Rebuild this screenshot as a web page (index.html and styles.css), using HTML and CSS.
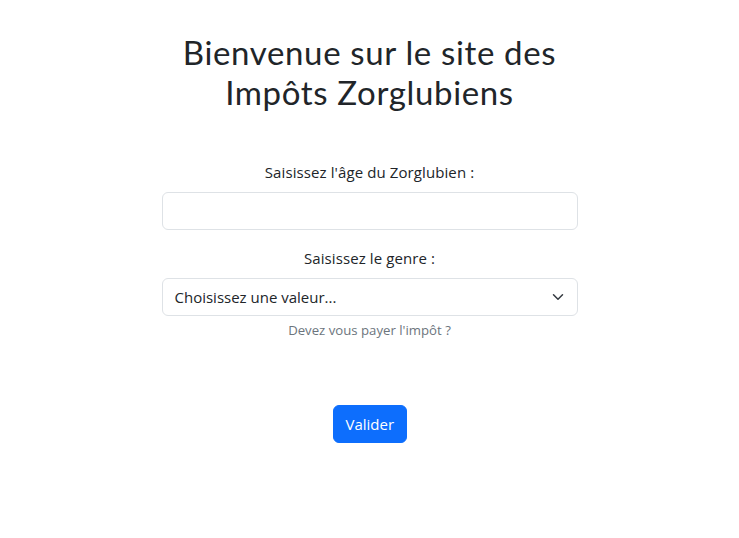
FILE: index.html
```html
<!DOCTYPE html>
<html lang="fr">
<head>
<meta charset="utf-8">
<title>Impôts Zorglubiens</title>
<link rel="stylesheet" href="styles.css">
</head>
<body>
<main class="page">
  <h1 class="title">Bienvenue sur le site des<br>Impôts Zorglubiens</h1>
  <form class="form">
    <div class="field">
      <label class="label" for="age">Saisissez l'âge du Zorglubien :</label>
      <input class="control" id="age" type="text">
    </div>
    <div class="field">
      <label class="label" for="genre">Saisissez le genre :</label>
      <div class="select">
        <span>Choisissez une valeur...</span>
        <svg class="chevron" width="16" height="12" viewBox="0 0 16 16"><path d="m2 5 6 6 6-6" fill="none" stroke="#343a40" stroke-width="2" stroke-linecap="round" stroke-linejoin="round"/></svg>
      </div>
      <div class="help">Devez vous payer l'impôt ?</div>
    </div>
    <div class="actions">
      <button class="btn" type="button">Valider</button>
    </div>
  </form>
</main>
</body>
</html>
```
FILE: styles.css
```css
* { box-sizing: border-box; }
body {
  margin: 0;
  background: #fff;
  color: #212529;
  font-family: "Open Sans", "Noto Sans", sans-serif;
  font-size: 16px;
}
.page {
  display: flex;
  flex-direction: column;
  align-items: center;
  padding-top: 33px;
}
.title {
  margin: 0;
  font-family: "Lato", "Open Sans", sans-serif;
  font-weight: 400;
  font-size: 33px;
  line-height: 39.5px;
  text-align: center;
  letter-spacing: 0.65px;
}
.form {
  width: 416px;
  margin-top: 48px;
  display: flex;
  flex-direction: column;
}
.field {
  display: flex;
  flex-direction: column;
  align-items: center;
  margin-bottom: 16px;
}
.label {
  display: block;
  line-height: 24px;
  margin-bottom: 8px;
  font-size: 15px;
  letter-spacing: 0.1px;
}
.control {
  width: 100%;
  height: 38px;
  border: 1px solid #dee2e6;
  border-radius: 6px;
  font: inherit;
  padding: 6px 12px;
}
.select {
  width: 100%;
  height: 38px;
  border: 1px solid #dee2e6;
  border-radius: 6px;
  padding: 0 11px 0 12px;
  display: flex;
  align-items: center;
  justify-content: space-between;
  font-size: 15px;
}
.help {
  margin-top: 4px;
  font-size: 13.2px;
  line-height: 21px;
  color: #6c757d;
}
.actions {
  display: flex;
  justify-content: center;
  margin-top: 48px;
}
.btn {
  background: #0d6efd;
  color: #fff;
  border: 1px solid #0d6efd;
  border-radius: 6px;
  font-family: inherit;
  font-size: 15px;
  line-height: 24px;
  padding: 6px 12px;
  height: 38px;
  width: 74px;
}
```
